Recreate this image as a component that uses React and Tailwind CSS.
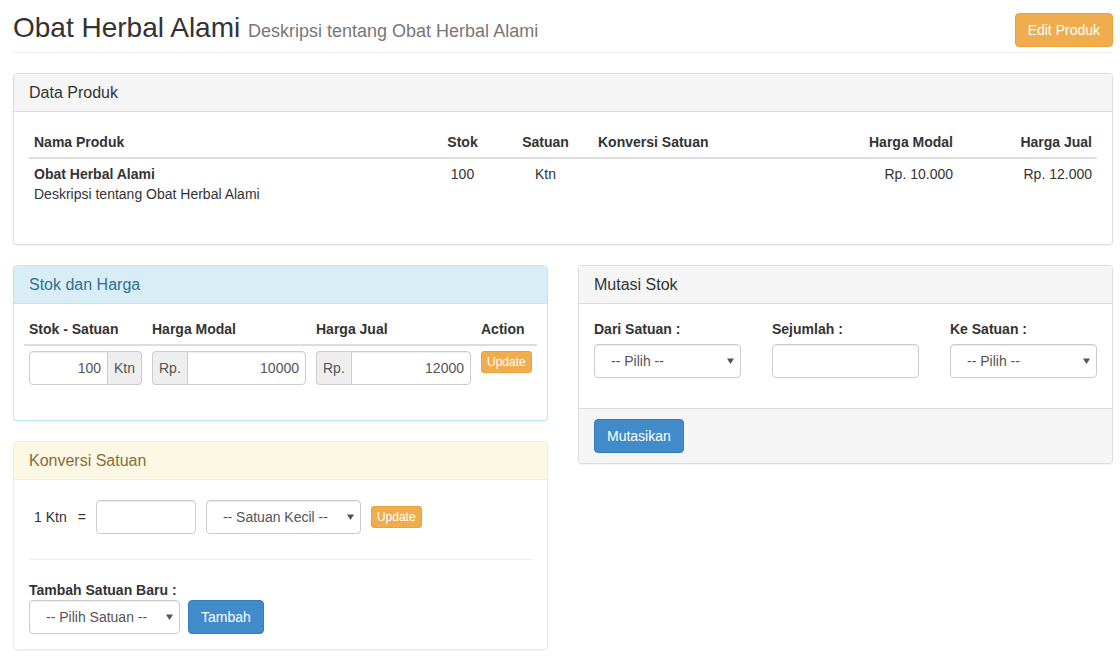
import React from 'react'

const tones = {
  default: {
    box: 'border-[#ddd]',
    head: 'bg-[#f5f5f5] border-[#ddd] text-[#333]',
  },
  info: {
    box: 'border-[#bce8f1]',
    head: 'bg-[#d9edf7] border-[#bce8f1] text-[#31708f]',
  },
  warning: {
    box: 'border-[#faebcc]',
    head: 'bg-[#fcf8e3] border-[#faebcc] text-[#8a6d3b]',
  },
}

function Panel({ title, tone = 'default', bodyClass = 'p-[15px]', footer, children }) {
  const t = tones[tone]
  return (
    <div className={`rounded-[4px] border bg-white shadow-[0_1px_1px_rgba(0,0,0,0.05)] ${t.box}`}>
      <div className={`rounded-t-[3px] border-b px-[15px] py-[10px] text-[16px] leading-[17px] ${t.head}`}>
        {title}
      </div>
      <div className={bodyClass}>{children}</div>
      {footer && (
        <div className="rounded-b-[3px] border-t border-[#ddd] bg-[#f5f5f5] px-[15px] py-[10px]">
          {footer}
        </div>
      )}
    </div>
  )
}

function Caret() {
  return (
    <svg width="7" height="6" viewBox="0 0 7 6" className="pointer-events-none absolute right-[7px] top-1/2 -translate-y-1/2">
      <path d="M0 0.5h7L3.5 6z" fill="#555" />
    </svg>
  )
}

function Select({ label, className = '' }) {
  return (
    <div className={`relative ${className}`}>
      <select className="h-[34px] w-full appearance-none rounded-[4px] border border-[#ccc] bg-white pl-[16px] pr-[20px] text-[14px] text-[#555] shadow-[inset_0_1px_1px_rgba(0,0,0,0.075)] outline-none">
        <option>{label}</option>
      </select>
      <Caret />
    </div>
  )
}

function TextInput({ value = '', className = '' }) {
  return (
    <input
      readOnly
      value={value}
      className={`h-[34px] rounded-[4px] border border-[#ccc] bg-white px-[6px] text-[14px] text-[#555] shadow-[inset_0_1px_1px_rgba(0,0,0,0.075)] outline-none ${className}`}
    />
  )
}

function Addon({ children, side }) {
  const round = side === 'left' ? 'rounded-l-[4px] border-r-0' : 'rounded-r-[4px] border-l-0'
  return (
    <span className={`flex h-[34px] items-center border border-[#ccc] bg-[#eee] px-[6px] text-[14px] text-[#555] ${round}`}>
      {children}
    </span>
  )
}

function XsButton() {
  return (
    <button className="rounded-[3px] border border-[#eea236] bg-[#f0ad4e] px-[5px] py-[1px] text-[12px] leading-[18px] text-white">
      Update
    </button>
  )
}

function PrimaryButton({ children }) {
  return (
    <button className="h-[34px] rounded-[4px] border border-[#357ebd] bg-[#428bca] px-[12px] text-[14px] text-white">
      {children}
    </button>
  )
}

function DataProduk() {
  return (
    <Panel title="Data Produk">
      <table className="mb-[20px] w-full table-fixed border-collapse text-[14px] leading-[20px]">
        <colgroup>
          <col className="w-[398px]" />
          <col className="w-[71px]" />
          <col className="w-[95px]" />
          <col className="w-[207px]" />
          <col className="w-[158px]" />
          <col className="w-[139px]" />
        </colgroup>
        <thead>
          <tr className="border-b-2 border-[#ddd] font-bold">
            <th className="p-[5px] text-left">Nama Produk</th>
            <th className="p-[5px] text-center">Stok</th>
            <th className="p-[5px] text-center">Satuan</th>
            <th className="p-[5px] text-left">Konversi Satuan</th>
            <th className="p-[5px] text-right">Harga Modal</th>
            <th className="p-[5px] text-right">Harga Jual</th>
          </tr>
        </thead>
        <tbody>
          <tr className="align-top">
            <td className="p-[5px]">
              <div className="font-bold">Obat Herbal Alami</div>
              <div>Deskripsi tentang Obat Herbal Alami</div>
            </td>
            <td className="p-[5px] text-center">100</td>
            <td className="p-[5px] text-center">Ktn</td>
            <td className="p-[5px]"></td>
            <td className="p-[5px] text-right">Rp. 10.000</td>
            <td className="p-[5px] text-right">Rp. 12.000</td>
          </tr>
        </tbody>
      </table>
    </Panel>
  )
}

function StokHarga() {
  const cols = 'grid grid-cols-[123px_164px_165px_1fr]'
  return (
    <Panel title="Stok dan Harga" tone="info" bodyClass="p-[10px]">
      <div className="mb-[25px] text-[14px] leading-[20px]">
        <div className={`${cols} border-b-2 border-[#ddd] font-bold`}>
          <div className="p-[5px]">Stok - Satuan</div>
          <div className="p-[5px]">Harga Modal</div>
          <div className="p-[5px]">Harga Jual</div>
          <div className="p-[5px]">Action</div>
        </div>
        <div className={`${cols} px-[5px] pt-[5px]`}>
          <div className="flex pr-[10px]">
            <TextInput value="100" className="min-w-0 flex-1 rounded-r-none text-right" />
            <Addon side="right">Ktn</Addon>
          </div>
          <div className="flex pr-[10px]">
            <Addon side="left">Rp.</Addon>
            <TextInput value="10000" className="min-w-0 flex-1 rounded-l-none text-right" />
          </div>
          <div className="flex pr-[10px]">
            <Addon side="left">Rp.</Addon>
            <TextInput value="12000" className="min-w-0 flex-1 rounded-l-none text-right" />
          </div>
          <div className="items-start">
            <XsButton />
          </div>
        </div>
      </div>
    </Panel>
  )
}

function KonversiSatuan() {
  return (
    <Panel title="Konversi Satuan" tone="warning">
      <div className="flex items-center px-[5px] pt-[5px] pb-[5px] text-[14px]">
        <span>1 Ktn</span>
        <span className="ml-[11px]">=</span>
        <TextInput className="ml-[10px] w-[100px]" />
        <Select label="-- Satuan Kecil --" className="ml-[10px] w-[155px]" />
        <div className="ml-[10px]">
          <XsButton />
        </div>
      </div>
      <hr className="my-[20px] border-t border-[#eee]" />
      <div className="text-[14px] font-bold leading-[20px]">Tambah Satuan Baru :</div>
      <div className="flex items-center gap-[8px]">
        <Select label="-- Pilih Satuan --" className="w-[151px]" />
        <PrimaryButton>Tambah</PrimaryButton>
      </div>
    </Panel>
  )
}

function MutasiStok() {
  return (
    <Panel title="Mutasi Stok" footer={<PrimaryButton>Mutasikan</PrimaryButton>}>
      <div className="grid grid-cols-3 gap-[31px] pb-[15px] text-[14px]">
        <div>
          <div className="mb-[5px] font-bold leading-[20px]">Dari Satuan :</div>
          <Select label="-- Pilih --" />
        </div>
        <div>
          <div className="mb-[5px] font-bold leading-[20px]">Sejumlah :</div>
          <TextInput className="w-full" />
        </div>
        <div>
          <div className="mb-[5px] font-bold leading-[20px]">Ke Satuan :</div>
          <Select label="-- Pilih --" />
        </div>
      </div>
    </Panel>
  )
}

export default function App() {
  return (
    <div className="min-h-screen bg-white pl-[13px] pr-[7px] font-['Liberation_Sans',Arial,sans-serif] text-[14px] leading-[20px] text-[#333]">
      <div className="flex items-start justify-between border-b border-[#eee] pt-[12px] pb-[9px]">
        <h1 className="h-[31px] text-[28px] font-normal leading-[31px]">
          Obat Herbal Alami <small className="text-[18px] leading-none text-[#777]">Deskripsi tentang Obat Herbal Alami</small>
        </h1>
        <button className="mt-[1px] -mb-[5px] h-[34px] rounded-[4px] border border-[#eea236] bg-[#f0ad4e] px-[12px] text-[14px] text-white">
          Edit Produk
        </button>
      </div>

      <div className="mt-[20px] mb-[20px]">
        <DataProduk />
      </div>

      <div className="grid grid-cols-[535px_1fr] gap-[30px]">
        <div className="flex flex-col gap-[20px]">
          <StokHarga />
          <KonversiSatuan />
        </div>
        <div>
          <MutasiStok />
        </div>
      </div>
    </div>
  )
}
